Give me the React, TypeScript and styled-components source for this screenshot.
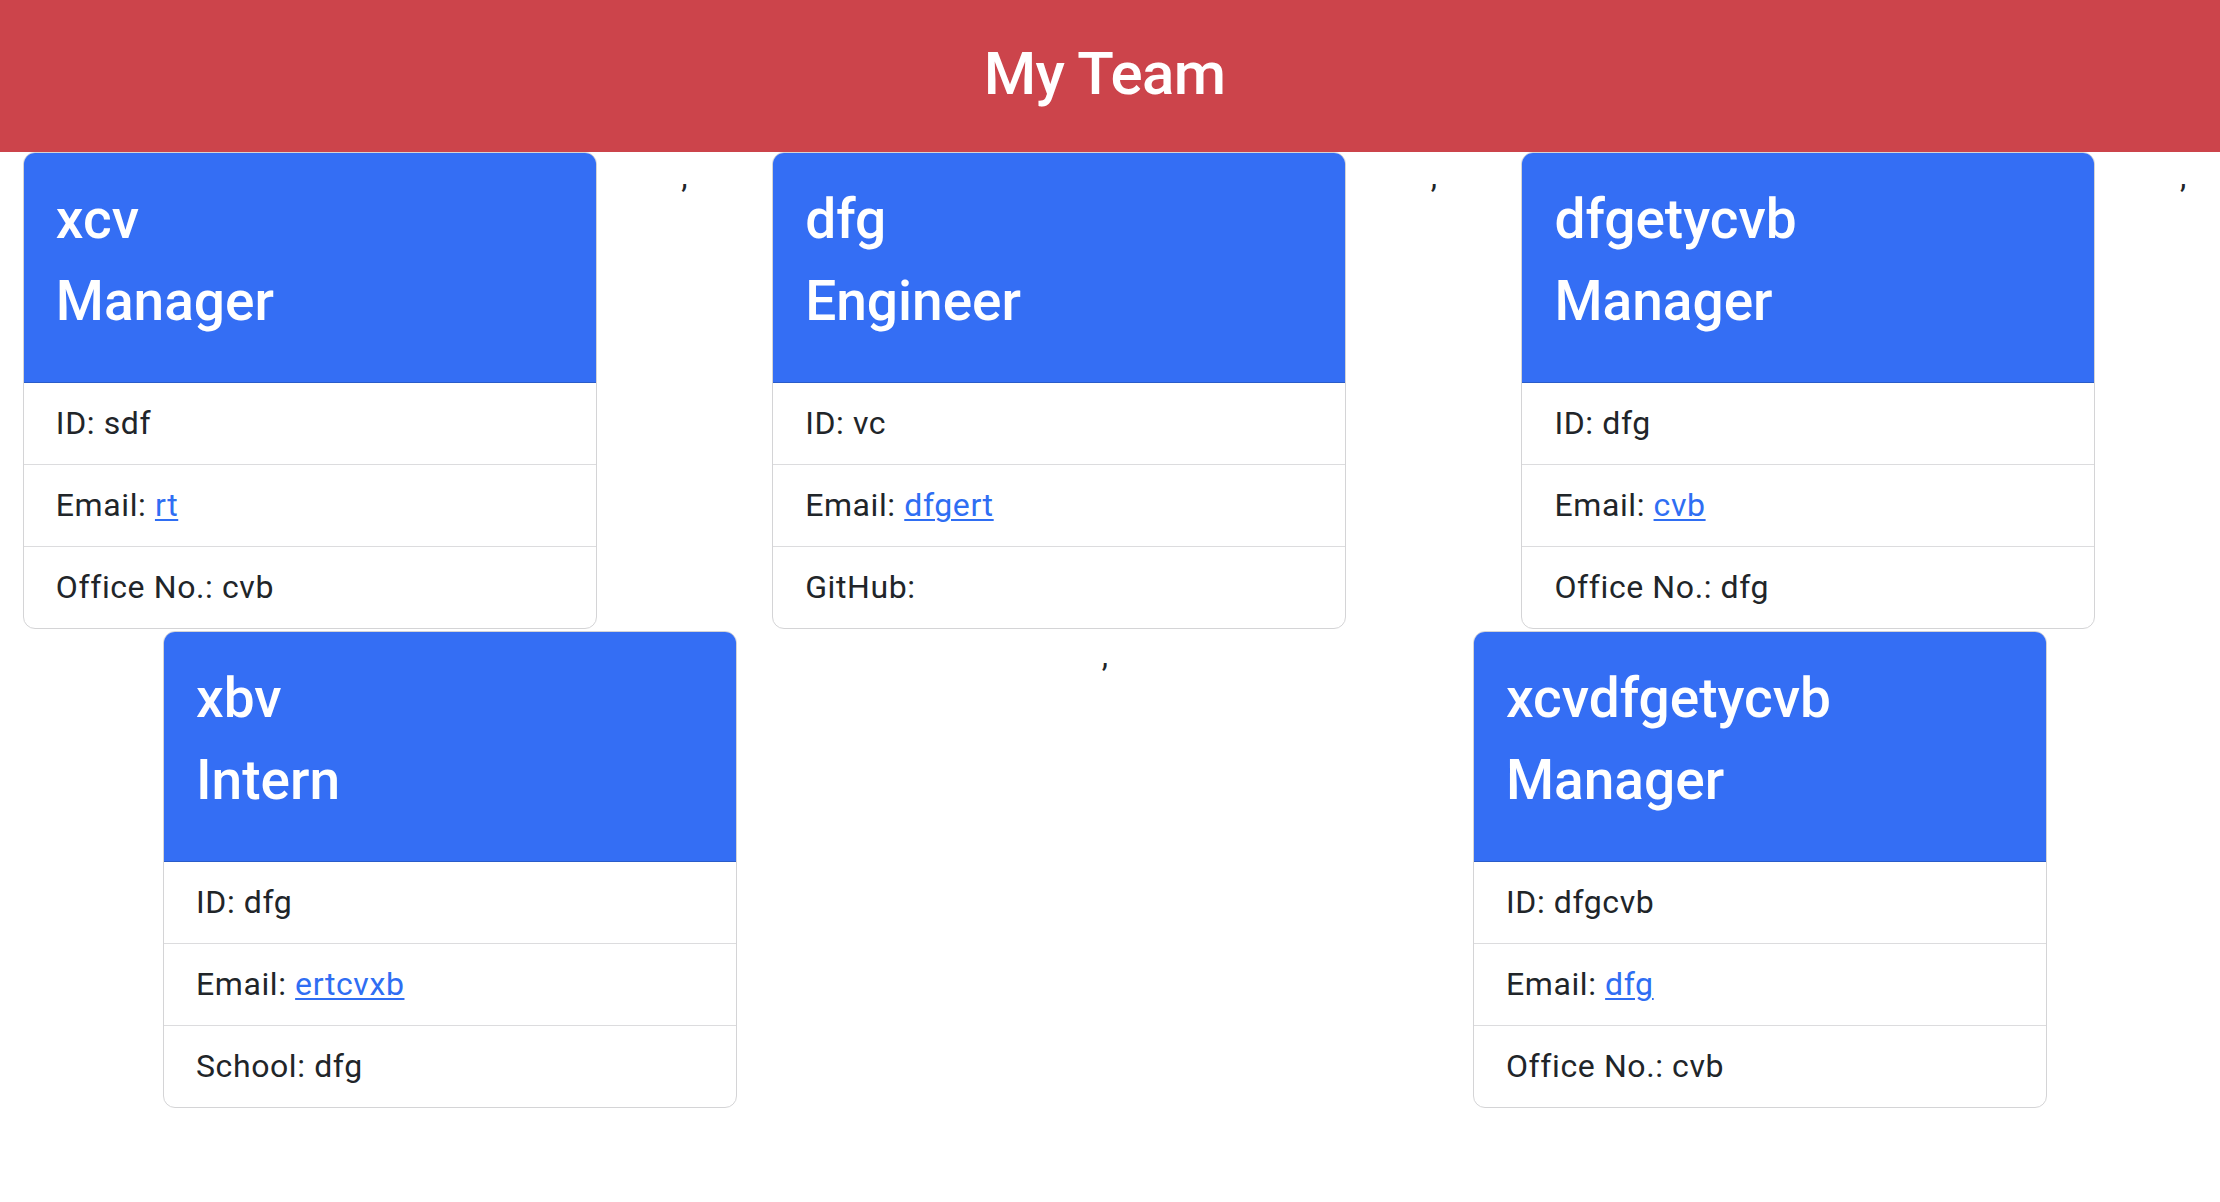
import React from "react";
import styled, { createGlobalStyle } from "styled-components";

const GlobalStyle = createGlobalStyle`
  html, body {
    margin: 0;
    padding: 0;
    background: #ffffff;
  }
  body {
    font-family: Roboto, "Liberation Sans", Arial, sans-serif;
    font-size: 32px;
    line-height: 1.5;
    color: #212529;
    overflow-x: hidden;
  }
  *, *::before, *::after { box-sizing: border-box; }
`;

const Banner = styled.header`
  height: 152px;
  background: #cc444b;
  display: flex;
  justify-content: center;
  padding: 38px 11px 0 0;
`;

const BannerTitle = styled.h1`
  margin: 0;
  font-size: 60px;
  line-height: 72px;
  font-weight: 500;
  letter-spacing: -0.6px;
  color: #ffffff;
`;

const Page = styled.main`
  overflow: hidden;
`;

const TeamRow = styled.section`
  display: flex;
  flex-wrap: wrap;
  justify-content: space-around;
  align-items: flex-start;
  row-gap: 2px;
  width: 2248px;
  margin-left: -19px;
`;

const Separator = styled.span`
  width: 8px;
  font-size: 32px;
  line-height: 48px;
  text-align: center;
`;

const Card = styled.article`
  width: 574px;
  background: #ffffff;
  border: 1px solid #d4d4d6;
  border-radius: 12px;
  overflow: hidden;
  display: flex;
  flex-direction: column;
`;

const CardHeader = styled.div`
  background: #346ef4;
  color: #ffffff;
  padding: 33px 32px 32px;
  border-bottom: 1px solid #2a5cc9;
`;

const Title = styled.h3`
  margin: 0 0 16px;
  font-size: 55px;
  line-height: 66px;
  font-weight: 500;
  letter-spacing: 0;
`;

const InfoList = styled.ul`
  list-style: none;
  margin: 0;
  padding: 0;
`;

const InfoItem = styled.li<{ $last?: boolean }>`
  padding: 16px 32px;
  line-height: 49px;
  font-size: 32px;
  letter-spacing: 0.6px;
  border-bottom: ${(p) => (p.$last ? "none" : "1px solid #dcdcde")};
`;

const MailLink = styled.a`
  color: #2f6ef3;
  text-decoration: underline;
  text-underline-offset: 3px;
  text-decoration-thickness: 2px;
`;

type Member = {
  name: string;
  role: string;
  id: string;
  email: string;
  extraLabel: string;
  extraValue: string;
};

const team: Member[] = [
  { name: "xcv", role: "Manager", id: "sdf", email: "rt", extraLabel: "Office No.", extraValue: "cvb" },
  { name: "dfg", role: "Engineer", id: "vc", email: "dfgert", extraLabel: "GitHub", extraValue: "" },
  { name: "dfgetycvb", role: "Manager", id: "dfg", email: "cvb", extraLabel: "Office No.", extraValue: "dfg" },
  { name: "xbv", role: "Intern", id: "dfg", email: "ertcvxb", extraLabel: "School", extraValue: "dfg" },
  { name: "xcvdfgetycvb", role: "Manager", id: "dfgcvb", email: "dfg", extraLabel: "Office No.", extraValue: "cvb" },
];

function MemberCard({ m }: { m: Member }) {
  return (
    <Card>
      <CardHeader>
        <Title>{m.name}</Title>
        <Title>{m.role}</Title>
      </CardHeader>
      <InfoList>
        <InfoItem>ID: {m.id}</InfoItem>
        <InfoItem>
          Email: <MailLink href={`mailto:${m.email}`}>{m.email}</MailLink>
        </InfoItem>
        <InfoItem $last>
          {m.extraLabel}: {m.extraValue}
        </InfoItem>
      </InfoList>
    </Card>
  );
}

export default function App() {
  return (
    <>
      <GlobalStyle />
      <Banner>
        <BannerTitle>My Team</BannerTitle>
      </Banner>
      <Page>
        <TeamRow>
          {team.map((m, i) => (
            <React.Fragment key={i}>
              <MemberCard m={m} />
              {i < team.length - 1 && <Separator>,</Separator>}
            </React.Fragment>
          ))}
        </TeamRow>
      </Page>
    </>
  );
}
